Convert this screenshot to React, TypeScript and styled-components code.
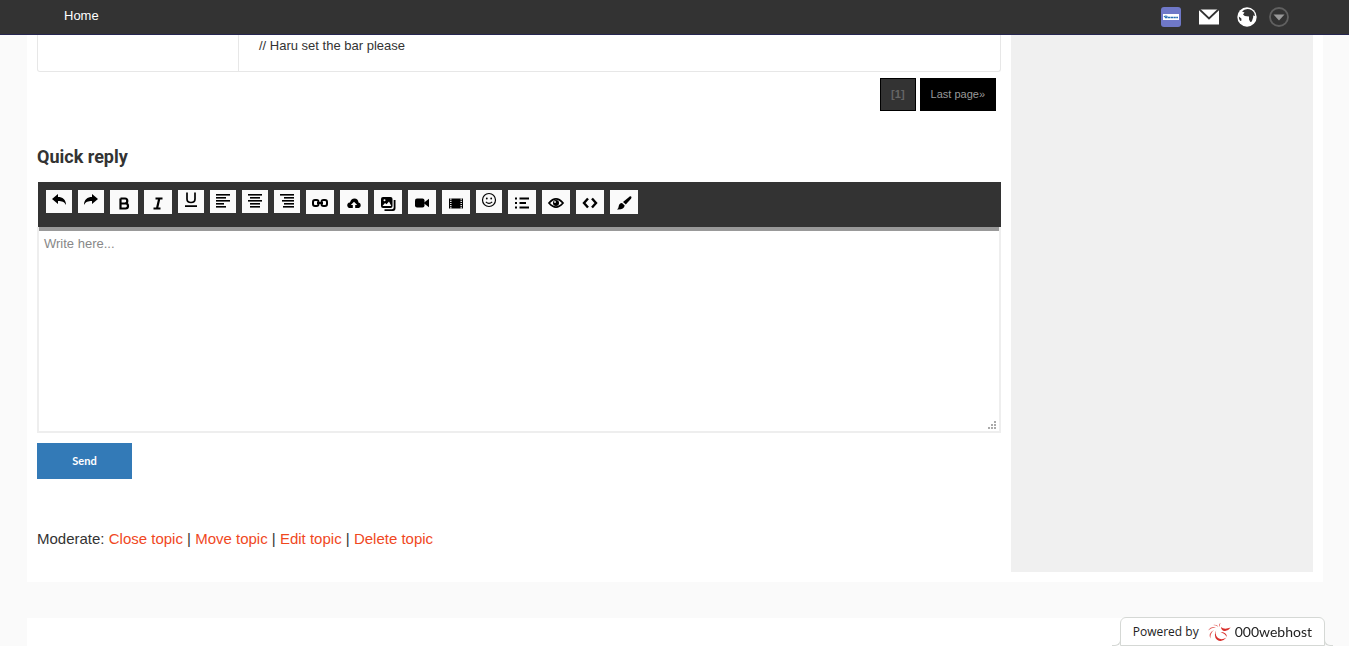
import React from 'react';
import styled, { createGlobalStyle } from 'styled-components';

const Global = createGlobalStyle`
  * { box-sizing: border-box; }
  body {
    margin: 0;
    background: #fafafa;
    color: #333;
    font-family: "Liberation Sans", Arial, sans-serif;
    font-size: 13px;
    line-height: 20px;
  }
  button { font: inherit; cursor: pointer; }
  a { text-decoration: none; }
  svg { display: block; }
`;

const TopBar = styled.header`
  display: flex;
  justify-content: space-between;
  height: 35px;
  padding: 6px 60px 0 64px;
  background: #333;
  border-bottom: 1px solid #262650;
`;

const HomeLink = styled.a`
  height: 20px;
  color: #fff;
`;

const TopIcons = styled.nav`
  display: flex;
  gap: 18px;
  padding-top: 1px;
`;

const IconPair = styled.div`
  display: flex;
  gap: 12px;
`;

const IconLink = styled.a`
  width: 20px;
  height: 20px;
  color: #fff;
`;

const Panel = styled.main`
  display: flex;
  gap: 10px;
  margin: 0 26px 36px 27px;
  padding: 0 10px;
  background: #fff;
`;

const Content = styled.div`
  flex: 1;
  min-width: 0;
  padding-bottom: 33px;
`;

const Sidebar = styled.aside`
  flex: 0 0 302px;
  margin-bottom: 10px;
  background: #f0f0f0;
`;

const Post = styled.article`
  display: flex;
  border: 1px solid #e7e7e7;
  border-top: 0;
  border-radius: 0 0 3px 3px;
`;

const PostAuthor = styled.div`
  flex: 0 0 201px;
  border-right: 1px solid #e7e7e7;
`;

const PostText = styled.div`
  padding: 1px 20px 15px;
`;

const Pager = styled.nav`
  display: flex;
  justify-content: flex-end;
  gap: 4px;
  margin: 6px 5px 34px 0;
`;

const PageLink = styled.a<{ $current?: boolean }>`
  padding: 5px 10px 6px;
  border: 1px solid #000;
  background: ${(p) => (p.$current ? '#333' : '#000')};
  color: ${(p) => (p.$current ? '#666' : '#999')};
  font-size: 11px;
  font-weight: ${(p) => (p.$current ? 700 : 400)};
`;

const Heading = styled.h2`
  margin: 0 0 13px;
  font-family: Roboto, "Liberation Sans", sans-serif;
  font-size: 18px;
  font-weight: 700;
  line-height: 24px;
`;

const Toolbar = styled.div`
  display: flex;
  align-items: flex-start;
  gap: 6px;
  height: 45px;
  margin-left: 1px;
  padding: 8px;
  background: #333;
`;

const Tool = styled.button<{ $small?: boolean }>`
  flex: none;
  display: flex;
  justify-content: center;
  align-items: ${(p) => (p.$small ? 'flex-start' : 'center')};
  width: ${(p) => (p.$small ? 26 : 28)}px;
  height: ${(p) => (p.$small ? 23 : 24)}px;
  padding: ${(p) => (p.$small ? 2 : 1)}px 0 0;
  border: 0;
  background: #fafafa;
  color: #000;
`;

const Editor = styled.div`
  position: relative;
  margin-bottom: 10px;
`;

const Reply = styled.textarea`
  display: block;
  width: 100%;
  height: 206px;
  padding: 7px 5px 3px;
  border: 2px solid #eee;
  border-top: 0;
  background: #fff;
  box-shadow: inset 0 4px #999;
  color: #333;
  font: inherit;
  resize: none;
  outline: none;
  &::placeholder { color: #888; }
`;

const Grip = styled.svg`
  position: absolute;
  right: 5px;
  bottom: 4px;
`;

const Send = styled.button`
  display: block;
  width: 95px;
  height: 36px;
  margin-bottom: 50px;
  padding: 0;
  border: 0;
  background: #337ab7;
  color: #fff;
  font-family: Lato, sans-serif;
  font-size: 11px;
  font-weight: 700;
`;

const Moderate = styled.p`
  margin: 0;
  font-size: 15px;
  a { color: #f0481e; }
`;

const Footer = styled.footer`
  height: 28px;
  margin: 0 26px 0 27px;
  background: #fff;
`;

const Powered = styled.a`
  position: fixed;
  right: 24px;
  bottom: 0;
  display: flex;
  align-items: center;
  gap: 8px;
  height: 29px;
  padding: 0 12px;
  border: 1px solid #d5d8d5;
  border-radius: 6px 6px 0 0;
  background: #fff;
  color: #222;
  font-family: "Open Sans", "Noto Sans", sans-serif;
  font-size: 12px;
  &::before, &::after {
    content: "";
    position: absolute;
    bottom: -1px;
    width: 8px;
    height: 6px;
    border-bottom: 1px solid #d5d8d5;
  }
  &::before { right: 100%; border-right: 1px solid #d5d8d5; border-bottom-right-radius: 6px; }
  &::after { left: 100%; border-left: 1px solid #d5d8d5; border-bottom-left-radius: 6px; }
`;

const Brand = styled.span`
  display: flex;
  align-items: center;
  gap: 4px;
  font-family: Lato, sans-serif;
  font-size: 14px;
`;

const Glyph = ({ children }: { children: React.ReactNode }) => (
  <svg width="18" height="16" viewBox="0 0 18 16" fill="currentColor" aria-hidden="true">{children}</svg>
);

const arrow = 'M2 7L8 2V5C12.500 5 16 7.500 16 13C14.300 9.800 12 9 8 9V12Z';

const lines = (starts: number[], widths: number[]) => (
  <Glyph>{starts.map((x, i) => <rect key={i} x={x} y={2 + i * 3} width={widths[i]} height="1.600" />)}</Glyph>
);

const Stroke = ({ d, width }: { d: string; width: number }) => (
  <path d={d} fill="none" stroke="currentColor" strokeWidth={width} />
);

const tools: { name: string; small?: boolean; icon: React.ReactNode }[] = [
  { name: 'Undo', small: true, icon: <Glyph><path d={arrow} /></Glyph> },
  { name: 'Redo', small: true, icon: <Glyph><path d={arrow} transform="matrix(-1 0 0 1 18 0)" /></Glyph> },
  { name: 'Bold', icon: <Glyph><Stroke width={2.2} d="M5.500 3.500V13.500H10.500Q13 13.500 13 11T10.500 8.500H6M5.500 3.500H10Q12.300 3.500 12.300 6T10 8.500" /></Glyph> },
  { name: 'Italic', icon: <Glyph><Stroke width={2.2} d="M6.500 3.500H13.500M10.300 3.500L8 13.500M4.500 13.500H11.500" /></Glyph> },
  { name: 'Underline', small: true, icon: <Glyph><Stroke width={1.7} d="M5 .5V7Q5 10.500 9 10.500T13 7V.5M3 14.200H15" /></Glyph> },
  { name: 'Align left', small: true, icon: lines([2, 2, 2, 2, 2], [14, 10, 14, 8, 10]) },
  { name: 'Align centre', small: true, icon: lines([2, 4, 2, 4, 4], [14, 10, 14, 10, 10]) },
  { name: 'Align right', small: true, icon: lines([2, 6, 4, 6, 5], [14, 10, 12, 10, 11]) },
  { name: 'Link', icon: (
    <Glyph>
      <g fill="none" stroke="currentColor" strokeWidth="2">
        <rect x="2" y="5" width="5.500" height="6" rx="2" />
        <rect x="10.500" y="5" width="5.500" height="6" rx="2" />
        <path d="M6 8h6" />
      </g>
    </Glyph>
  ) },
  { name: 'Upload', icon: (
    <Glyph>
      <path d="M4 13A3 3 0 0 1 3.500 7.800Q4.500 7.400 5 7.500Q6 3.500 9.500 3.500Q13 3.500 13.500 7.500A2.900 2.900 0 0 1 14 13Z" />
      <path d="M9 6.800L5.800 10H7.800V13H10.200V10H12.200Z" fill="#fafafa" />
    </Glyph>
  ) },
  { name: 'Images', icon: (
    <Glyph>
      <rect x="2" y="2" width="11.500" height="11" rx="2" />
      <path d="M14.700 5H16.500V13Q16.500 16 14 16H5.500V14.200H13Q14.700 14.200 14.700 12.500Z" />
      <path d="M3.500 11L6 8L7.500 9.300L10 6.500L12.300 11Z" fill="#fafafa" />
      <circle cx="5.500" cy="5.300" r="1" fill="#fafafa" />
    </Glyph>
  ) },
  { name: 'Video', icon: (
    <Glyph>
      <rect x="2" y="3.500" width="9.500" height="9" rx="2" />
      <path d="M10.500 8L16 3.800V12.200Z" />
    </Glyph>
  ) },
  { name: 'Film', icon: (
    <Glyph>
      <path d="M2 3.500H16V13.500H2Z" />
      <path d="M3.800 3.500V13.500M14.200 3.500V13.500" stroke="#fafafa" strokeWidth="1.400" strokeDasharray="1.200 1" />
    </Glyph>
  ) },
  { name: 'Smiley', small: true, icon: (
    <Glyph>
      <g fill="none" stroke="currentColor">
        <circle cx="9" cy="8" r="6.500" strokeWidth="1.200" />
        <path d="M5.800 9.800Q9 13 12.200 9.800" strokeWidth="1.100" />
      </g>
      <circle cx="6.800" cy="6.500" r=".9" />
      <circle cx="11.200" cy="6.500" r=".9" />
    </Glyph>
  ) },
  { name: 'List', icon: (
    <Glyph>
      <path d="M2 2.500h2v2H2zM2 7h2v2H2zM2 11.500h2v2H2zM6.500 2.500H16v2H6.500zM6.500 7H13v2H6.500zM6.500 11.500H16v2H6.500z" />
    </Glyph>
  ) },
  { name: 'Preview', icon: (
    <Glyph>
      <path d="M2 8Q9-.2 16 8Q9 16.200 2 8Z" fill="none" stroke="currentColor" strokeWidth="1.800" />
      <circle cx="9" cy="8" r="3" />
      <circle cx="8" cy="7" r=".9" fill="#fafafa" />
    </Glyph>
  ) },
  { name: 'Code', icon: <Glyph><Stroke width={2.4} d="M7 3.500L3 8L7 12.500M11 3.500L15 8L11 12.500" /></Glyph> },
  { name: 'Brush', icon: (
    <Glyph>
      <path d="M15 1.200Q17.300 1 16 3.800L10.800 9.500L8 7Z" />
      <path d="M7 8L9.700 10.500Q9 15 2 14.500Q3.600 13.500 3.700 11.300Q4 8.300 7 8Z" />
    </Glyph>
  ) },
];

const topics = ['Close topic', 'Move topic', 'Edit topic', 'Delete topic'];

export default function App() {
  return (
    <>
      <Global />
      <TopBar>
        <HomeLink href="#">Home</HomeLink>
        <TopIcons>
          <IconLink href="#" aria-label="Community">
            <svg width="20" height="20" viewBox="0 0 20 20">
              <rect width="20" height="20" rx="3" fill="#6f78c8" />
              <rect x="2" y="7" width="16" height="6" fill="#fff" />
              <path d="M3 10Q4.500 8.300 6.500 9.500" fill="none" stroke="#286fb5" strokeWidth="1.200" />
              <path d="M4 10.500H17" stroke="#286fb5" strokeWidth="1.400" strokeDasharray="2.400 .4" />
            </svg>
          </IconLink>
          <IconLink href="#" aria-label="Messages">
            <svg width="20" height="20" viewBox="0 0 20 20">
              <path d="M0 2.500H20V17.500H0Z" fill="#fff" />
              <path d="M0 2L10 11.500L20 2" fill="none" stroke="#333" strokeWidth="1.800" />
            </svg>
          </IconLink>
          <IconPair>
            <IconLink href="#" aria-label="Language">
              <svg width="20" height="20" viewBox="0 0 20 20">
                <circle cx="10" cy="10" r="9.700" fill="#fff" />
                <path d="M5 4.500Q7 2 10.500 2Q15 2 17.300 6L18 9L16 8.500L16.300 10L14.800 14.500L13.300 15L12 12.500V9.500L7.800 9L6 7.500L7.500 5.500Z" fill="#333" />
                <path d="M1.800 9.500L4.300 11.500L4.500 13.500L3.200 14Q1.800 12 1.800 9.500Z" fill="#333" />
              </svg>
            </IconLink>
            <IconLink href="#" aria-label="More">
              <svg width="20" height="20" viewBox="0 0 20 20">
                <circle cx="10" cy="10" r="9" fill="none" stroke="#606060" strokeWidth="1.800" />
                <path d="M4.500 7.500H15.500L10 13.500Z" fill="#999" />
              </svg>
            </IconLink>
          </IconPair>
        </TopIcons>
      </TopBar>
      <Panel>
        <Content>
          <Post>
            <PostAuthor />
            <PostText>// Haru set the bar please</PostText>
          </Post>
          <Pager>
            <PageLink href="#" $current>[1]</PageLink>
            <PageLink href="#">Last page»</PageLink>
          </Pager>
          <Heading>Quick reply</Heading>
          <Toolbar>
            {tools.map((t) => (
              <Tool key={t.name} type="button" aria-label={t.name} $small={t.small}>{t.icon}</Tool>
            ))}
          </Toolbar>
          <Editor>
            <Reply aria-label="Quick reply" placeholder="Write here..." />
            <Grip width="8" height="8" viewBox="0 0 8 8" fill="#aaa" aria-hidden="true">
              <path d="M6 0h2v2H6zM3 3h2v2H3zM6 3h2v2H6zM0 6h2v2H0zM3 6h2v2H3zM6 6h2v2H6z" />
            </Grip>
          </Editor>
          <Send type="button">Send</Send>
          <Moderate>
            Moderate:{' '}
            {topics.map((t, i) => (
              <React.Fragment key={t}>
                {i > 0 && ' | '}
                <a href="#">{t}</a>
              </React.Fragment>
            ))}
          </Moderate>
        </Content>
        <Sidebar />
      </Panel>
      <Footer />
      <Powered href="#">
        Powered by
        <Brand>
          <svg width="24" height="20" viewBox="0 0 24 20" fill="#d9302c">
            <path d="M14 5Q17 8 23.700 5.500Q20 10.500 15.800 8.500Q14 7.500 14 5Z" />
            <path d="M10.500 6Q6.500 12 11 16Q14.500 18.500 19.500 15.500Q15 21 10 17.800Q5.500 13.500 10.500 6Z" />
            <path d="M13.500 10Q19.500 10 20 15Q18 11.500 13.500 10Z" />
            <path d="M7 8Q3 11.500 3.500 16.500Q.5 11.500 7 8Z" opacity=".8" />
            <path d="M1 8.500Q4 4 9 5.300Q4.500 5.500 1 8.500Z" opacity=".8" />
            <path d="M6 3Q10 2 11.500 5Q9 3.200 6 3Z" opacity=".8" />
            <path d="M13.500 .8Q11.300 2.500 13 5Q12.500 2.500 13.500 .8Z" />
          </svg>
          000webhost
        </Brand>
      </Powered>
    </>
  );
}
